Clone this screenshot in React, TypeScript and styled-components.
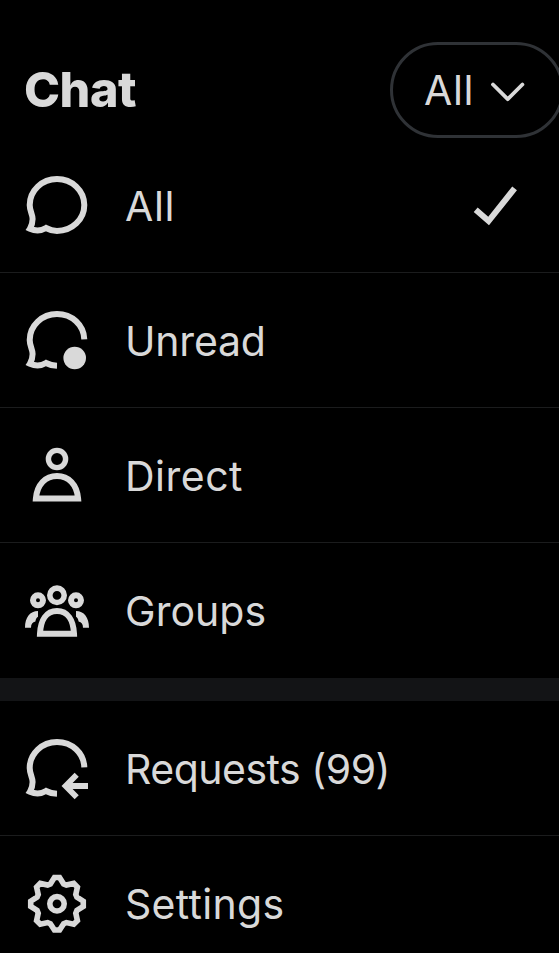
import React from 'react';
import styled, { createGlobalStyle } from 'styled-components';

const GlobalStyle = createGlobalStyle`
  html, body {
    margin: 0;
    background: #000;
    overflow: hidden;
  }
  * { box-sizing: border-box; }
`;

const Screen = styled.main`
  display: flex;
  flex-direction: column;
  width: 100%;
  height: 953px;
  overflow: hidden;
  background: #000;
  color: #d9d9d9;
  font-family: Inter, 'Liberation Sans', sans-serif;
`;

const Header = styled.header`
  display: flex;
  flex: none;
  align-items: center;
  justify-content: space-between;
  height: 138px;
  padding: 42px 0 0 24px;
  margin-right: -5px;
`;

const Title = styled.h1`
  margin: 0;
  font-size: 48.5px;
  font-weight: 800;
  line-height: 96px;
  letter-spacing: -0.5px;
`;

const FilterButton = styled.button`
  display: flex;
  flex: none;
  align-items: center;
  justify-content: space-between;
  width: 174px;
  height: 96px;
  padding: 0 36px 0 31px;
  border: 3px solid #2f3236;
  border-radius: 48px;
  background: transparent;
  color: inherit;
  font: 400 41px/60px Inter, 'Liberation Sans', sans-serif;
  letter-spacing: 0.6px;
`;

const Menu = styled.ul`
  flex: none;
  margin: 0;
  padding: 0;
  list-style: none;
`;

const Item = styled.li<{ $last?: boolean }>`
  display: flex;
  align-items: center;
  height: 135px;
  padding: 0 41px 1px 25px;
  border-bottom: 1px solid ${(p) => (p.$last ? 'transparent' : '#1b1c1d')};
`;

const Label = styled.span<{ $tracking: number }>`
  flex: 1;
  margin-left: 36px;
  padding-top: 2px;
  font-size: 41px;
  line-height: 60px;
  letter-spacing: ${(p) => p.$tracking}px;
  white-space: nowrap;
`;

const Divider = styled.div`
  flex: none;
  height: 23px;
  background: #131416;
`;

const IconSvg = styled.svg`
  flex: none;
  display: block;
  width: 64px;
  height: 64px;
  fill: none;
  stroke: currentColor;
  stroke-width: 6;
  overflow: visible;
`;

const CheckSvg = styled(IconSvg)`
  width: 44px;
  height: 44px;
  stroke-width: 6;
`;

const ChevronSvg = styled(IconSvg)`
  width: 34px;
  height: 20px;
  margin-top: 3px;
  stroke-width: 3.8;
  stroke-linecap: round;
  stroke-linejoin: round;
`;

const OPEN_BUBBLE =
  'M59.3 31.3 C58.8 17 47 6 32 6 C17 6 4.7 17.5 4.7 32 C4.7 38 7.6 41 7.6 46 C7.6 50 6.8 52.6 4.9 55.7 C10 58 16 58 21 55 C24 56.6 27.5 57.7 32 57.8';

const AllIcon = () => (
  <IconSvg viewBox="0 0 64 64">
    <path d="M32 6 C47 6 59.3 17.5 59.3 32 S47 58 32 58 C27.5 58 24 56.6 21 55 C16 58 10 58 4.9 55.7 C6.8 52.6 7.6 50 7.6 46 C7.6 41 4.7 38 4.7 32 C4.7 17.5 17 6 32 6 Z" />
  </IconSvg>
);

const UnreadIcon = () => (
  <IconSvg viewBox="0 0 64 64">
    <path d={OPEN_BUBBLE} />
    <circle cx="49.7" cy="50" r="11.3" fill="currentColor" stroke="none" />
  </IconSvg>
);

const RequestsIcon = () => (
  <IconSvg viewBox="0 0 64 64">
    <path d={OPEN_BUBBLE} />
    <path d="M51.7 38.7 L40.6 50 L51.7 61.3 M40.6 50 H63" strokeWidth="5.8" />
  </IconSvg>
);

const DirectIcon = () => (
  <IconSvg viewBox="0 0 64 64">
    <circle cx="32" cy="16" r="8.6" strokeWidth="5.4" />
    <path d="M10.9 55.6 C12 41.5 20.5 33 32 33 S52 41.5 53.1 55.6 Z" />
  </IconSvg>
);

const GroupsIcon = () => (
  <IconSvg viewBox="0 0 64 64">
    <circle cx="32" cy="17.3" r="7.2" strokeWidth="5.6" />
    <circle cx="13" cy="22.3" r="5" />
    <circle cx="51" cy="22.3" r="5" />
    <path d="M15 55.7 C15.6 42 21.5 33 32 33 S48.4 42 49 55.7 Z" />
    <path
      d="M0 49.7 C0 39.5 5 33 13 33 V38.7 C11.5 39.5 10.9 41 10.4 43.5 C7.5 44 6 46 6 49.7 Z M64 49.7 C64 39.5 59 33 51 33 V38.7 C52.5 39.5 53.1 41 53.6 43.5 C56.5 44 58 46 58 49.7 Z"
      fill="currentColor"
      stroke="none"
    />
  </IconSvg>
);

const polar = (radius: number, degrees: number) => {
  const angle = (degrees * Math.PI) / 180;
  return `${(32 + radius * Math.sin(angle)).toFixed(2)},${(32.8 - radius * Math.cos(angle)).toFixed(2)}`;
};

const GEAR_POINTS = Array.from({ length: 8 }, (_, i) => {
  const a = i * 45;
  return [polar(26.4, a - 5.6), polar(26.4, a + 5.6), polar(21, a + 18.5), polar(21, a + 26.5)].join(' ');
}).join(' ');

const SettingsIcon = () => (
  <IconSvg viewBox="0 0 64 64">
    <polygon points={GEAR_POINTS} strokeWidth="5.6" />
    <circle cx="32" cy="32.8" r="7.2" strokeWidth="5.6" />
  </IconSvg>
);

interface Entry {
  label: string;
  tracking: number;
  Icon: React.FC;
  selected?: boolean;
}

const FILTERS: Entry[] = [
  { label: 'All', tracking: 0.7, Icon: AllIcon, selected: true },
  { label: 'Unread', tracking: -0.2, Icon: UnreadIcon },
  { label: 'Direct', tracking: 0.5, Icon: DirectIcon },
  { label: 'Groups', tracking: 0.05, Icon: GroupsIcon },
];

const ACTIONS: Entry[] = [
  { label: 'Requests (99)', tracking: -0.5, Icon: RequestsIcon },
  { label: 'Settings', tracking: 0.3, Icon: SettingsIcon },
];

const MenuList = ({ entries }: { entries: Entry[] }) => (
  <Menu>
    {entries.map(({ label, tracking, Icon, selected }, i) => (
      <Item key={label} $last={i === entries.length - 1}>
        <Icon />
        <Label $tracking={tracking}>{label}</Label>
        {selected && (
          <CheckSvg viewBox="0 0 44 44">
            <path d="M1.7 26.7 L14.6 38 L40.6 5.4" />
          </CheckSvg>
        )}
      </Item>
    ))}
  </Menu>
);

export default function App() {
  return (
    <>
      <GlobalStyle />
      <Screen>
        <Header>
          <Title>Chat</Title>
          <FilterButton>
            All
            <ChevronSvg viewBox="0 0 34 20">
              <path d="M2 2.5 L16.7 17.2 L31.4 2.5" />
            </ChevronSvg>
          </FilterButton>
        </Header>
        <MenuList entries={FILTERS} />
        <Divider />
        <MenuList entries={ACTIONS} />
      </Screen>
    </>
  );
}
